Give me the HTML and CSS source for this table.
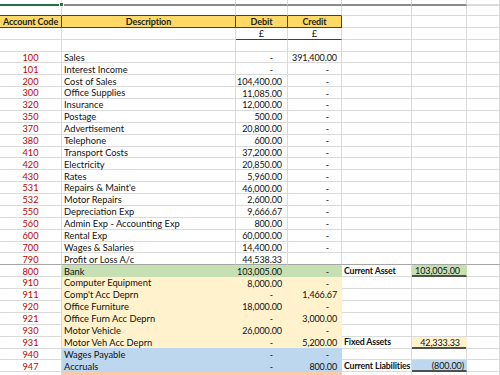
FILE: index.html
```html
<!DOCTYPE html>
<html>
<head>
<meta charset="utf-8">
<link rel="stylesheet" href="styles.css">
</head>
<body>
<div class="sheet">
  <div class="row r0">
    <div class="c sel"></div><div class="c tl"></div><div class="c tl"></div><div class="c tl"></div><div class="c tl"></div><div class="c tl"></div><div class="c"></div>
  </div>
  <div class="row r1">
    <div class="c hb"></div><div class="c hb"></div><div class="c hb"></div><div class="c hb"></div><div class="c"></div><div class="c"></div><div class="c"></div>
  </div>
  <div class="row">
    <div class="c hd">Account Code</div><div class="c hd">Description</div><div class="c hd">Debit</div><div class="c hd">Credit</div><div class="c"></div><div class="c"></div><div class="c"></div>
  </div>
  <div class="row">
    <div class="c"></div><div class="c"></div><div class="c cur ub">£</div><div class="c cur ub">£</div><div class="c"></div><div class="c"></div><div class="c"></div>
  </div>
  <div class="row">
    <div class="c"></div><div class="c"></div><div class="c"></div><div class="c"></div><div class="c"></div><div class="c"></div><div class="c"></div>
  </div>

  <div class="row"><div class="c code">100</div><div class="c desc">Sales</div><div class="c dr dash">-</div><div class="c cr">391,400.00</div><div class="c"></div><div class="c"></div><div class="c"></div></div>
  <div class="row"><div class="c code">101</div><div class="c desc">Interest Income</div><div class="c dr dash">-</div><div class="c cr dash">-</div><div class="c"></div><div class="c"></div><div class="c"></div></div>
  <div class="row"><div class="c code">200</div><div class="c desc">Cost of Sales</div><div class="c dr">104,400.00</div><div class="c cr dash">-</div><div class="c"></div><div class="c"></div><div class="c"></div></div>
  <div class="row"><div class="c code">300</div><div class="c desc">Office Supplies</div><div class="c dr">11,085.00</div><div class="c cr dash">-</div><div class="c"></div><div class="c"></div><div class="c"></div></div>
  <div class="row"><div class="c code">320</div><div class="c desc">Insurance</div><div class="c dr">12,000.00</div><div class="c cr dash">-</div><div class="c"></div><div class="c"></div><div class="c"></div></div>
  <div class="row"><div class="c code">350</div><div class="c desc">Postage</div><div class="c dr">500.00</div><div class="c cr dash">-</div><div class="c"></div><div class="c"></div><div class="c"></div></div>
  <div class="row"><div class="c code">370</div><div class="c desc">Advertisement</div><div class="c dr">20,800.00</div><div class="c cr dash">-</div><div class="c"></div><div class="c"></div><div class="c"></div></div>
  <div class="row"><div class="c code">380</div><div class="c desc">Telephone</div><div class="c dr">600.00</div><div class="c cr dash">-</div><div class="c"></div><div class="c"></div><div class="c"></div></div>
  <div class="row"><div class="c code">410</div><div class="c desc">Transport Costs</div><div class="c dr">37,200.00</div><div class="c cr dash">-</div><div class="c"></div><div class="c"></div><div class="c"></div></div>
  <div class="row"><div class="c code">420</div><div class="c desc">Electricity</div><div class="c dr">20,850.00</div><div class="c cr dash">-</div><div class="c"></div><div class="c"></div><div class="c"></div></div>
  <div class="row"><div class="c code">430</div><div class="c desc">Rates</div><div class="c dr">5,960.00</div><div class="c cr dash">-</div><div class="c"></div><div class="c"></div><div class="c"></div></div>
  <div class="row"><div class="c code">531</div><div class="c desc">Repairs &amp; Maint'e</div><div class="c dr">46,000.00</div><div class="c cr dash">-</div><div class="c"></div><div class="c"></div><div class="c"></div></div>
  <div class="row"><div class="c code">532</div><div class="c desc">Motor Repairs</div><div class="c dr">2,600.00</div><div class="c cr dash">-</div><div class="c"></div><div class="c"></div><div class="c"></div></div>
  <div class="row"><div class="c code">550</div><div class="c desc">Depreciation Exp</div><div class="c dr">9,666.67</div><div class="c cr dash">-</div><div class="c"></div><div class="c"></div><div class="c"></div></div>
  <div class="row"><div class="c code">560</div><div class="c desc">Admin Exp - Accounting Exp</div><div class="c dr">800.00</div><div class="c cr dash">-</div><div class="c"></div><div class="c"></div><div class="c"></div></div>
  <div class="row"><div class="c code">600</div><div class="c desc">Rental Exp</div><div class="c dr">60,000.00</div><div class="c cr dash">-</div><div class="c"></div><div class="c"></div><div class="c"></div></div>
  <div class="row"><div class="c code">700</div><div class="c desc">Wages &amp; Salaries</div><div class="c dr">14,400.00</div><div class="c cr dash">-</div><div class="c"></div><div class="c"></div><div class="c"></div></div>
  <div class="row sep"><div class="c code">790</div><div class="c desc">Profit or Loss A/c</div><div class="c dr">44,538.33</div><div class="c cr"></div><div class="c"></div><div class="c"></div><div class="c"></div></div>

  <div class="row"><div class="c code">800</div><div class="c desc g">Bank</div><div class="c dr g">103,005.00</div><div class="c cr dash g">-</div><div class="c lbl">Current Asset</div><div class="c tot g">103,005.00</div><div class="c"></div></div>
  <div class="row"><div class="c code">910</div><div class="c desc y">Computer Equipment</div><div class="c dr y">8,000.00</div><div class="c cr dash y">-</div><div class="c"></div><div class="c"></div><div class="c"></div></div>
  <div class="row"><div class="c code">911</div><div class="c desc y">Comp't Acc Deprn</div><div class="c dr dash y">-</div><div class="c cr y">1,466.67</div><div class="c"></div><div class="c"></div><div class="c"></div></div>
  <div class="row"><div class="c code">920</div><div class="c desc y">Office Furniture</div><div class="c dr y">18,000.00</div><div class="c cr dash y">-</div><div class="c"></div><div class="c"></div><div class="c"></div></div>
  <div class="row"><div class="c code">921</div><div class="c desc y">Office Furn Acc Deprn</div><div class="c dr dash y">-</div><div class="c cr y">3,000.00</div><div class="c"></div><div class="c"></div><div class="c"></div></div>
  <div class="row"><div class="c code">930</div><div class="c desc y">Motor Vehicle</div><div class="c dr y">26,000.00</div><div class="c cr dash y">-</div><div class="c"></div><div class="c"></div><div class="c"></div></div>
  <div class="row"><div class="c code">931</div><div class="c desc y">Motor Veh Acc Deprn</div><div class="c dr dash y">-</div><div class="c cr y">5,200.00</div><div class="c lbl">Fixed Assets</div><div class="c tot y">42,333.33</div><div class="c"></div></div>
  <div class="row"><div class="c code">940</div><div class="c desc b">Wages Payable</div><div class="c dr dash b">-</div><div class="c cr dash b">-</div><div class="c"></div><div class="c"></div><div class="c"></div></div>
  <div class="row"><div class="c code">947</div><div class="c desc b">Accruals</div><div class="c dr dash b">-</div><div class="c cr b">800.00</div><div class="c lbl">Current Liabilities</div><div class="c tot neg b">(800.00)</div><div class="c"></div></div>
  <div class="row"><div class="c"></div><div class="c p"></div><div class="c p"></div><div class="c p"></div><div class="c"></div><div class="c"></div><div class="c"></div></div>
</div>
</body>
</html>
```

FILE: styles.css
```css
* { box-sizing: border-box; margin: 0; padding: 0; }
html, body { margin: 0; background: #ffffff; overflow: hidden; }
body {
  font-family: Lato, "Liberation Sans", sans-serif;
  font-size: 9.3px;
  color: #111111;
}
.sheet {
  display: flex;
  flex-direction: column;
  width: 500px;
  height: 375px;
  overflow: hidden;
}
.row {
  display: grid;
  grid-template-columns: 62px 174px 52px 54px 70px 55px 33px;
  height: 11.88px;
  flex: none;
}
.r0 { height: 6px; }
.r1 { height: 9.88px; }
.c {
  border-right: 1px solid #dadada;
  border-bottom: 1px solid #dadada;
  display: flex;
  align-items: center;
  white-space: nowrap;
  line-height: 1;
  padding: 1px 2px 0 2px;
  min-width: 0;
}
.r0 .c { border-bottom-width: 2px; }
.sel { border-bottom-color: #217346; position: relative; }
.sel::after {
  content: "";
  position: absolute;
  right: -3px;
  bottom: -3px;
  width: 3px;
  height: 3px;
  background: #217346;
  border: 1px solid #ffffff;
  box-sizing: content-box;
}
.tl { border-bottom-color: #8a8a8a; }
.hb { border-bottom-color: #404040; }
.hd {
  background: #ffd966;
  border-right-color: #404040;
  border-bottom-color: #404040;
  justify-content: center;
  font-weight: bold;
  font-size: 9px;
  letter-spacing: -0.1px;
  color: #222;
  overflow: hidden;
}
.cur { justify-content: center; }
.ub { border-bottom-color: #404040; }
.code { justify-content: center; color: #c00000; font-size: 9.2px; }
.desc { padding-left: 2px; }
.dr, .cr, .tot { justify-content: flex-end; font-size: 9px; letter-spacing: -0.1px; }
.dr { padding-right: 5px; }
.cr { padding-right: 4px; }
.dr.dash { padding-right: 14px; }
.cr.dash { padding-right: 12px; }
.sep .c { border-bottom-color: #a6a6a6; }
.lbl {
  font-weight: bold;
  font-size: 8.8px;
  letter-spacing: -0.15px;
  padding-left: 2px;
  padding-right: 0;
  overflow: hidden;
}
.tot { padding-right: 6px; border-bottom: 2px solid #505050; }
.tot.neg { padding-right: 2px; }
.g { background: #c6e0b4; border-right-color: #c6e0b4; border-bottom-color: #c6e0b4; }
.y { background: #fff2cc; border-right-color: #fff2cc; border-bottom-color: #fff2cc; }
.b { background: #bdd7ee; border-right-color: #bdd7ee; border-bottom-color: #bdd7ee; }
.p { background: #f8cbad; border-right-color: #f8cbad; border-bottom-color: #f8cbad; }
.tot.g, .tot.y, .tot.b { border-bottom-color: #505050; }
```
